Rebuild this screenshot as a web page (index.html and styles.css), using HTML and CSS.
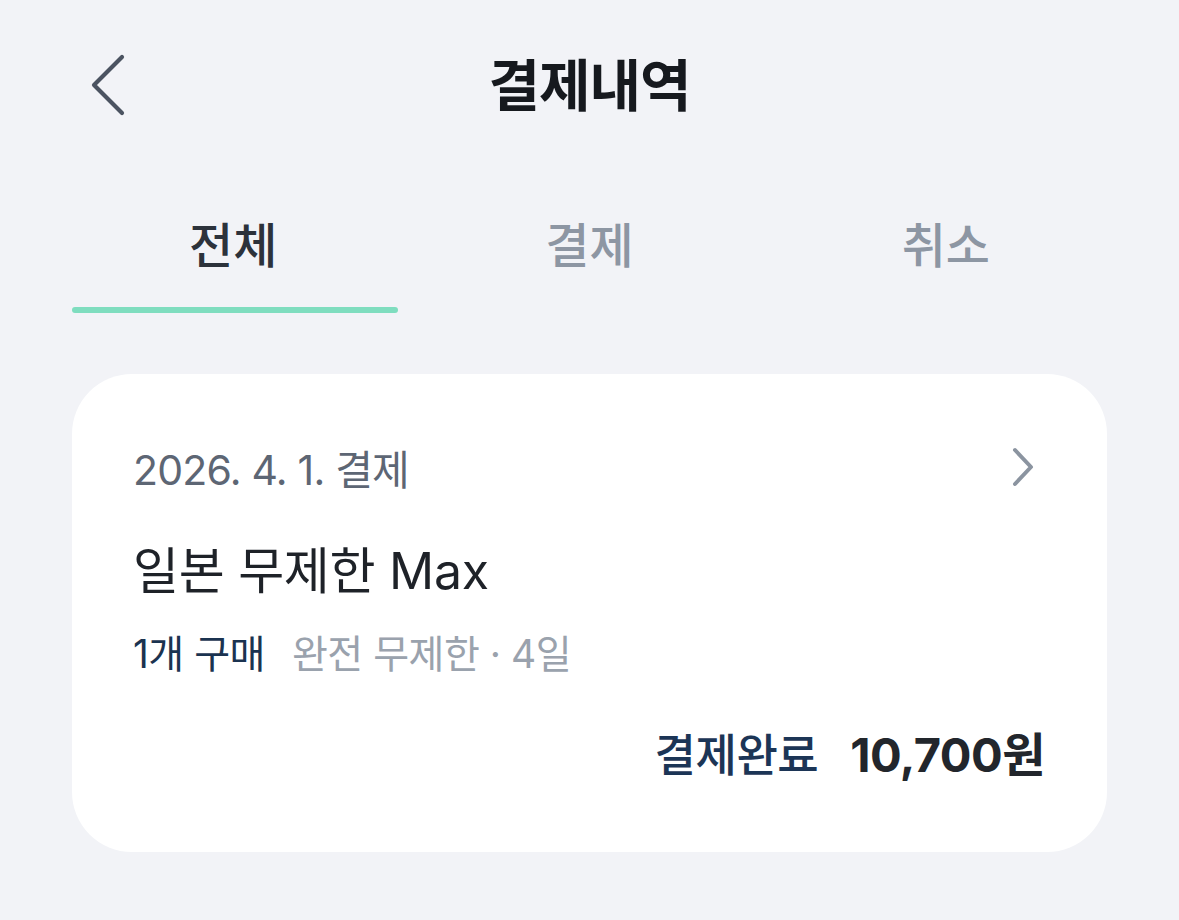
FILE: index.html
```html
<!DOCTYPE html>
<html lang="ko">
<head>
<meta charset="utf-8">
<title>결제내역</title>
<link rel="stylesheet" href="styles.css">
</head>
<body>
<div class="screen">
  <header class="topbar">
    <button class="back" aria-label="뒤로">
      <svg width="40" height="64" viewBox="0 0 40 64"><path d="M34 4 L6 32 L34 60" fill="none" stroke="#4b5361" stroke-width="4.2" stroke-linecap="round" stroke-linejoin="round"/></svg>
    </button>
    <h1 class="title">결제내역</h1>
  </header>
  <nav class="tabs">
    <div class="tab active"><span class="tab-label">전체</span><span class="tab-bar"></span></div>
    <div class="tab"><span class="tab-label">결제</span><span class="tab-bar"></span></div>
    <div class="tab"><span class="tab-label">취소</span><span class="tab-bar"></span></div>
  </nav>
  <section class="card">
    <div class="card-head">
      <span class="date">2026. 4. 1. 결제</span>
      <svg class="chev" width="24" height="40" viewBox="0 0 24 40"><path d="M4 3 L20 20 L4 37" fill="none" stroke="#8b94a0" stroke-width="4" stroke-linecap="round" stroke-linejoin="round"/></svg>
    </div>
    <div class="product">일본 무제한 Max</div>
    <div class="meta"><span class="qty">1개 구매</span><span class="desc">완전 무제한 · 4일</span></div>
    <div class="total"><span class="status">결제완료</span><span class="price">10,700원</span></div>
  </section>
</div>
</body>
</html>
```
FILE: styles.css
```css
* { box-sizing: border-box; }
html, body { margin: 0; padding: 0; }
body {
  background: #f2f3f7;
  font-family: Inter, "Noto Sans CJK KR", sans-serif;
  width: 1179px;
  height: 920px;
  overflow: hidden;
}
.screen { display: flex; flex-direction: column; }
.topbar {
  position: relative;
  height: 172px;
  display: flex;
  align-items: center;
  justify-content: center;
}
.back {
  position: absolute;
  left: 88px;
  top: 53px;
  background: none;
  border: 0;
  padding: 0;
  width: 40px;
  height: 64px;
}
.back svg { display: block; }
.title {
  margin: 0;
  font-size: 56px;
  font-weight: 700;
  color: #16191e;
  letter-spacing: -1px;
  line-height: 72px;
}
.tabs {
  display: grid;
  grid-template-columns: repeat(3, 1fr);
  padding: 0 55px;
}
.tab {
  display: flex;
  flex-direction: column;
  align-items: center;
  padding-top: 40px;
}
.tab-label {
  font-size: 48px;
  line-height: 68px;
  font-weight: 500;
  color: #8d96a3;
}
.tab.active .tab-label { color: #2c323b; }
.tab-bar {
  align-self: stretch;
  margin: 27px 13px 0 17px;
  height: 6px;
  border-radius: 3px;
}
.tab.active .tab-bar { background: #7fddbf; }
.card {
  margin: 61px 72px 0;
  background: #fff;
  border-radius: 60px;
  padding: 60px 62px 66px 61px;
  display: flex;
  flex-direction: column;
}
.card-head {
  display: flex;
  align-items: center;
  justify-content: space-between;
  height: 66px;
}
.date {
  font-size: 41px;
  color: #5d6674;
  letter-spacing: -0.8px;
}
.chev { margin-right: 10px; display: block; }
.product {
  margin-top: 38px;
  font-size: 50px;
  line-height: 66px;
  color: #1e2228;
  letter-spacing: -0.3px;
}
.meta {
  margin-top: 22px;
  line-height: 56px;
  font-size: 39px;
  display: flex;
  gap: 27px;
  letter-spacing: -0.5px;
}
.qty { color: #1b3350; }
.desc { color: #9aa2ad; }
.total {
  margin-top: 43px;
  line-height: 60px;
  display: flex;
  justify-content: flex-end;
  align-items: baseline;
  gap: 32px;
}
.status {
  font-size: 45px;
  font-weight: 500;
  color: #1c3556;
  letter-spacing: -0.5px;
}
.price {
  font-size: 47px;
  font-weight: 700;
  color: #22262c;
  letter-spacing: -0.5px;
}
```
